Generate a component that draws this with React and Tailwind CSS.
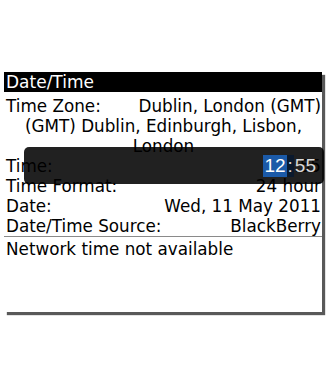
export default function App() {
  const font = { fontFamily: '"DejaVu Sans", sans-serif' };
  const Row = ({ l, r }) => (
    <div className="flex h-[20px] items-center justify-between leading-[20px]">
      <span>{l}</span>
      <span>{r}</span>
    </div>
  );
  return (
    <div className="w-[330px] h-[385px] bg-white pt-[72px] pl-[4px]" style={font}>
      <div className="relative w-[318px] h-[240px] bg-white shadow-[3px_3px_1px_rgba(0,0,0,0.65)] text-[16.8px] text-black">
        <div className="h-[20px] bg-black text-white text-[17px] leading-[20px] pl-[2px]">Date/Time</div>
        <div className="mt-[4px] pl-[2px] pr-[1px]">
          <Row l="Time Zone:" r="Dublin, London (GMT)" />
          <div className="h-[20px] leading-[20px] text-center">(GMT) Dublin, Edinburgh, Lisbon,</div>
          <div className="h-[20px] leading-[20px] text-center">London</div>
          <Row l="Time:" r="12:55" />
          <Row l="Time Format:" r="24 hour" />
          <Row l="Date:" r="Wed, 11 May 2011" />
          <Row l="Date/Time Source:" r="BlackBerry" />
        </div>
        <div className="h-[1px] bg-[#8a8a8a]"></div>
        <div className="pl-[2px] mt-[2px] h-[20px] leading-[20px]">Network time not available</div>

        <div className="absolute left-[20px] top-[75px] w-[300px] h-[37px] rounded-[5px] bg-[rgba(0,0,0,0.87)] flex items-center justify-end pr-[7px]">
          <div className="flex items-center text-[19px] leading-[22px] text-[#d8d8d8]" style={{ fontFamily: '"Liberation Sans", sans-serif' }}>
            <span className="bg-[#1b5aa8] text-white px-[1px]">12</span>
            <span className="bg-[#0b1a2e] px-[1px]">:</span>
            <span className="px-[1px]">55</span>
          </div>
        </div>
      </div>
    </div>
  );
}
